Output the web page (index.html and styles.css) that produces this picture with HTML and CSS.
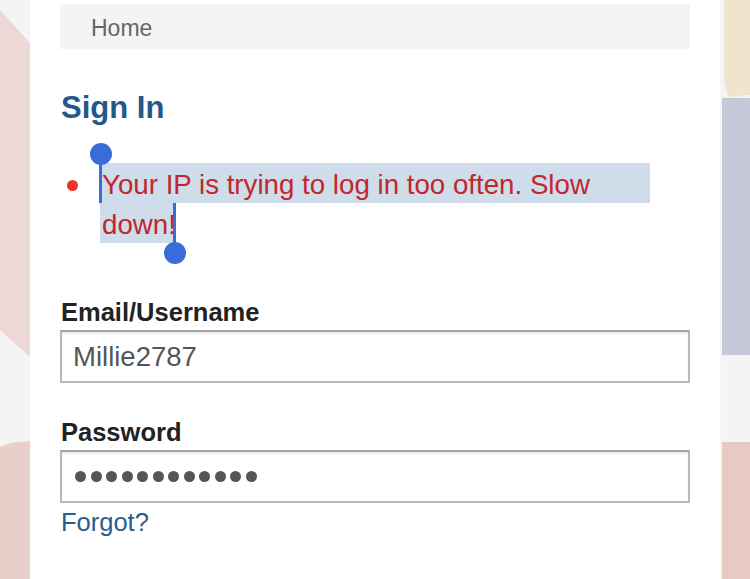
FILE: index.html
```html
<!DOCTYPE html>
<html>
<head>
<meta charset="utf-8">
<link rel="stylesheet" href="styles.css">
</head>
<body>
<div class="page">
  <div class="strip">
    <svg width="30" height="579" viewBox="0 0 30 579" preserveAspectRatio="none">
      <rect x="0" y="0" width="30" height="579" fill="#f4f4f4"/>
      <polygon points="0,10 30,43 30,357 0,330" fill="#ecd9d6"/>
      <polygon points="0,447 10,443 30,441 30,579 0,579" fill="#e8cfca"/>
    </svg>
  </div>
  <main class="panel">
    <nav class="crumbs">Home</nav>
    <h1 class="title">Sign In</h1>
    <ul class="errors">
      <li class="error">
        <span class="dot"></span>
        <div class="msg">
          <span class="sel-line">Your IP is trying to log in too often. Slow</span>
          <span class="sel-end">down!</span>
          <span class="handle handle-start"></span>
          <span class="handle handle-end"></span>
        </div>
      </li>
    </ul>
    <label class="label">Email/Username</label>
    <div class="field">Millie2787</div>
    <label class="label label-pass">Password</label>
    <div class="field field-pass">
      <span class="pdot"></span><span class="pdot"></span><span class="pdot"></span><span class="pdot"></span><span class="pdot"></span><span class="pdot"></span><span class="pdot"></span><span class="pdot"></span><span class="pdot"></span><span class="pdot"></span><span class="pdot"></span><span class="pdot"></span>
    </div>
    <a class="forgot">Forgot?</a>
  </main>
  <div class="strip">
    <svg width="30" height="579" viewBox="0 0 30 579" preserveAspectRatio="none">
      <rect x="0" y="0" width="30" height="579" fill="#f4f4f4"/>
      <polygon points="4,0 30,0 30,95 8,97 4,80" fill="#efe4cc"/>
      <rect x="0" y="98" width="30" height="257" fill="#c5c8d9"/>
      <rect x="0" y="442" width="30" height="137" fill="#e8c9c4"/>
      <rect x="0" y="0" width="2" height="579" fill="#f6f6f6"/>
    </svg>
  </div>
</div>
</body>
</html>
```
FILE: styles.css
```css
html, body {
  margin: 0;
  padding: 0;
}
body {
  width: 750px;
  height: 579px;
  overflow: hidden;
  font-family: "Liberation Sans", Arial, sans-serif;
  background: #ffffff;
}
.page {
  display: flex;
  height: 579px;
}
.strip {
  width: 30px;
  flex: none;
  height: 579px;
}
.strip svg {
  display: block;
}
.panel {
  flex: none;
  width: 630px;
  padding: 0 30px;
  background: #ffffff;
  display: flex;
  flex-direction: column;
  align-items: flex-start;
}
.crumbs {
  margin-top: 4px;
  align-self: stretch;
  height: 45px;
  line-height: 48px;
  padding-left: 31px;
  background: #f4f4f4;
  color: #666666;
  font-size: 23px;
}
.title {
  margin: 39px 0 0 1px;
  font-size: 31px;
  line-height: 40px;
  font-weight: bold;
  color: #24588a;
}
.errors {
  list-style: none;
  margin: 35px 0 0 0;
  padding: 0;
  align-self: stretch;
}
.error {
  display: flex;
  align-items: flex-start;
}
.dot {
  flex: none;
  width: 11px;
  height: 11px;
  border-radius: 50%;
  background: #e8352a;
  margin: 17px 22px 0 7px;
}
.msg {
  position: relative;
  width: 550px;
  font-size: 27.7px;
  line-height: 40px;
  color: #c1272d;
}
.sel-line {
  display: block;
  background: #cfdcea;
  padding: 2px 0 0 2px;
  height: 38px;
  white-space: nowrap;
}
.sel-end {
  display: inline-block;
  vertical-align: top;
  background: #cfdcea;
  padding: 2px 0 0 2px;
  height: 38px;
  width: 74px;
  white-space: nowrap;
}
.handle {
  position: absolute;
  width: 3px;
  height: 40px;
  background: #3a6cd9;
}
.handle::after {
  content: "";
  position: absolute;
  width: 22px;
  height: 22px;
  border-radius: 50%;
  background: #3a6cd9;
  left: -9.5px;
}
.handle-start {
  left: -1px;
  top: 0;
}
.handle-start::after {
  top: -20px;
}
.handle-end {
  left: 73px;
  top: 40px;
}
.handle-end::after {
  top: 39px;
}
.label {
  display: block;
  margin: 54px 0 0 1px;
  font-size: 25.5px;
  line-height: 30px;
  font-weight: bold;
  color: #222222;
}
.label-pass {
  margin-top: 34px;
}
.field {
  align-self: stretch;
  margin-top: 3px;
  height: 49px;
  border: 2px solid #b8b8b8;
  border-top-color: #a4a4a4;
  box-shadow: inset 0 2px 2px rgba(0, 0, 0, 0.08);
  padding-left: 11px;
  display: flex;
  align-items: center;
  font-size: 27.5px;
  color: #555555;
  background: #ffffff;
}
.field-pass {
  gap: 4.5px;
  padding-left: 13px;
}
.pdot {
  width: 11px;
  height: 11px;
  border-radius: 50%;
  background: #555555;
}
.forgot {
  margin: 4px 0 0 1px;
  font-size: 25.5px;
  line-height: 30px;
  color: #2a5d8f;
}
```
